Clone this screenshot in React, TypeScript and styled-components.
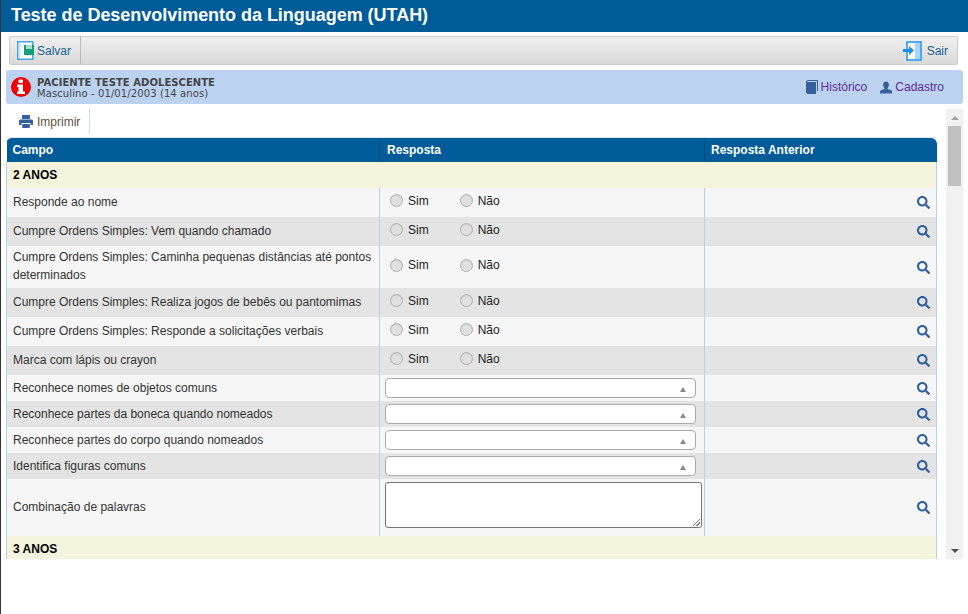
import React from 'react';
import styled, { createGlobalStyle } from 'styled-components';
import { FaSearch } from 'react-icons/fa';

const GlobalStyle = createGlobalStyle`
  html, body {
    margin: 0;
    padding: 0;
    background: #fff;
    overflow: hidden;
  }
  * {
    box-sizing: border-box;
  }
`;

type Row =
  | { kind: 'section'; label: string }
  | { kind: 'radio' | 'select' | 'text'; label: string };

const rows: Row[] = [
  { kind: 'section', label: '2 ANOS' },
  { kind: 'radio', label: 'Responde ao nome' },
  { kind: 'radio', label: 'Cumpre Ordens Simples: Vem quando chamado' },
  { kind: 'radio', label: 'Cumpre Ordens Simples: Caminha pequenas distâncias até pontos determinados' },
  { kind: 'radio', label: 'Cumpre Ordens Simples: Realiza jogos de bebês ou pantomimas' },
  { kind: 'radio', label: 'Cumpre Ordens Simples: Responde a solicitações verbais' },
  { kind: 'radio', label: 'Marca com lápis ou crayon' },
  { kind: 'select', label: 'Reconhece nomes de objetos comuns' },
  { kind: 'select', label: 'Reconhece partes da boneca quando nomeados' },
  { kind: 'select', label: 'Reconhece partes do corpo quando nomeados' },
  { kind: 'select', label: 'Identifica figuras comuns' },
  { kind: 'text', label: 'Combinação de palavras' },
  { kind: 'section', label: '3 ANOS' },
];

const SaveIcon = () => (
  <svg width="18" height="19" viewBox="0 0 18 19">
    <rect x="0.75" y="0.75" width="15" height="17.5" fill="#fff" stroke="#45a3e8" strokeWidth="1.5" />
    <rect x="7" y="4" width="10" height="10" fill="#12a07f" />
    <rect x="9" y="4" width="6" height="4" fill="#a8e0d0" />
    <rect x="2" y="2" width="2" height="15" fill="#d6ecfb" />
  </svg>
);

const ExitIcon = () => (
  <svg width="19" height="20" viewBox="0 0 19 20">
    <rect x="4" y="1" width="14" height="18" fill="#fff" stroke="#2a97ef" strokeWidth="1.6" />
    <path d="M12 2 L17 2 L17 18 L12 18 Z" fill="#a9d4f7" />
    <path d="M0 8 H6 V5 L11 9.5 L6 14 V11 H0 Z" fill="#1b8fee" />
  </svg>
);

const InfoIcon = () => (
  <svg width="20" height="20" viewBox="0 0 20 20">
    <circle cx="10" cy="10" r="10" fill="#f00000" />
    <rect x="7.5" y="2.5" width="4.5" height="3.5" rx="1" fill="#fff" />
    <path d="M6 7.5 H12 V14.5 H14 V17 H6 V14.5 H7.5 V10 H6 Z" fill="#fff" />
  </svg>
);

const BookIcon = () => (
  <svg width="12" height="14" viewBox="0 0 12 14">
    <path d="M0 1.5 L1.5 0 H12 V11 H11 V1 H2 L1 2 H10 V14 H1.5 L0 12.5 Z" fill="#36609c" />
  </svg>
);

const UserIcon = () => (
  <svg width="12" height="13" viewBox="0 0 13 13">
    <path d="M6.5 0 C8.6 0 9.6 1.6 9.6 3.6 C9.6 5.2 8.9 6.4 8.2 7.2 V8 L12 9.6 C12.7 9.9 13 10.4 13 11 V13 H0 V11 C0 10.4 0.3 9.9 1 9.6 L4.8 8 V7.2 C4.1 6.4 3.4 5.2 3.4 3.6 C3.4 1.6 4.4 0 6.5 0 Z" fill="#36609c" />
  </svg>
);

const PrintIcon = () => (
  <svg width="14" height="13" viewBox="0 0 14 13">
    <path d="M3 0 H11 V4 H3 Z" fill="#36609c" />
    <path d="M1.5 4.5 H12.5 C13.4 4.5 14 5.1 14 6 V10 H11.5 V8 H2.5 V10 H0 V6 C0 5.1 0.6 4.5 1.5 4.5 Z" fill="#36609c" />
    <path d="M3.2 9 H10.8 V13 H3.2 Z" fill="#36609c" />
  </svg>
);

const Radio = ({ label }: { label: string }) => (
  <RadioLabel>
    <RadioDot />
    {label}
  </RadioLabel>
);

export default function App() {
  return (
    <Page>
      <GlobalStyle />
      <TitleBar>Teste de Desenvolvimento da Linguagem (UTAH)</TitleBar>
      <Toolbar>
        <SaveButton>
          <SaveIcon />
          Salvar
        </SaveButton>
        <ExitButton>
          <ExitIcon />
          Sair
        </ExitButton>
      </Toolbar>
      <PatientBar>
        <InfoIcon />
        <PatientInfo>
          <PatientName>PACIENTE TESTE ADOLESCENTE</PatientName>
          <PatientMeta>Masculino - 01/01/2003 (14 anos)</PatientMeta>
        </PatientInfo>
        <PatientLinks>
          <PatientLink>
            <BookIcon />
            Histórico
          </PatientLink>
          <PatientLink>
            <UserIcon />
            Cadastro
          </PatientLink>
        </PatientLinks>
      </PatientBar>
      <Body>
        <Main>
          <PrintBar>
            <PrintButton>
              <PrintIcon />
              Imprimir
            </PrintButton>
          </PrintBar>
          <TableFrame>
            <Table>
              <colgroup>
                <col style={{ width: 373 }} />
                <col style={{ width: 325 }} />
                <col />
              </colgroup>
              <thead>
                <tr>
                  <HeadCell>Campo</HeadCell>
                  <HeadCell>Resposta</HeadCell>
                  <HeadCell>Resposta Anterior</HeadCell>
                </tr>
              </thead>
              <tbody>
                {rows.map((row, i) =>
                  row.kind === 'section' ? (
                    <tr key={i}>
                      <SectionCell colSpan={3}>{row.label}</SectionCell>
                    </tr>
                  ) : (
                    <DataRow key={i} $odd={i % 2 === 1} $kind={row.kind}>
                      <LabelCell $kind={row.kind}>{row.label}</LabelCell>
                      <AnswerCell>
                        {row.kind === 'radio' && (
                          <RadioGroup>
                            <Radio label="Sim" />
                            <Radio label="Não" />
                          </RadioGroup>
                        )}
                        {row.kind === 'select' && <SelectBox />}
                        {row.kind === 'text' && <TextBox />}
                      </AnswerCell>
                      <PreviousCell>
                        <FaSearch size={13} color="#2f5f9e" />
                      </PreviousCell>
                    </DataRow>
                  ),
                )}
              </tbody>
            </Table>
          </TableFrame>
        </Main>
        <ScrollTrack>
          <ScrollUp />
          <ScrollThumb />
          <ScrollDown />
        </ScrollTrack>
      </Body>
    </Page>
  );
}

const Page = styled.div`
  height: 614px;
  border-left: 1px solid #333;
  font-family: 'Liberation Sans', Arial, sans-serif;
  overflow: hidden;
`;

const TitleBar = styled.div`
  height: 32px;
  margin-left: -1px;
  padding: 0 0 2px 11px;
  display: flex;
  align-items: center;
  background: #005b99;
  color: #fff;
  font-size: 18px;
  font-weight: bold;
  letter-spacing: -0.03px;
`;

const Toolbar = styled.div`
  height: 29px;
  margin: 4px 10px 0 8px;
  display: flex;
  justify-content: space-between;
  border: 1px solid #ccc;
  border-radius: 2px;
  background: linear-gradient(#f0f0f0, #d9d9d9);
`;

const ToolButton = styled.div`
  display: flex;
  align-items: center;
  color: #1c5f94;
  font-size: 12px;
`;

const SaveButton = styled(ToolButton)`
  width: 71px;
  padding-left: 7px;
  gap: 2px;
  border-right: 1px solid #bbb;
`;

const ExitButton = styled(ToolButton)`
  padding-right: 9px;
  gap: 5px;
`;

const PatientBar = styled.div`
  height: 34px;
  margin: 5px 5px 0 5px;
  padding-left: 5px;
  display: flex;
  align-items: center;
  gap: 6px;
  background: #bbd3f1;
  border-radius: 3px;
`;

const PatientInfo = styled.div`
  display: flex;
  flex-direction: column;
  margin-top: 1px;
  font-family: 'DejaVu Sans', Verdana, sans-serif;
  font-size: 10px;
  color: #444;
`;

const PatientName = styled.span`
  font-weight: bold;
  line-height: 11px;
  letter-spacing: 0.05px;
`;

const PatientMeta = styled.span`
  line-height: 11px;
  letter-spacing: 0.1px;
`;

const PatientLinks = styled.div`
  margin-left: auto;
  padding-right: 19px;
  display: flex;
  gap: 13px;
`;

const PatientLink = styled.div`
  display: flex;
  align-items: center;
  gap: 3px;
  color: #5b2d91;
  font-size: 12px;
`;

const Body = styled.div`
  margin: 5px 5px 0 5px;
  height: 450px;
  display: flex;
  justify-content: space-between;
`;

const Main = styled.div`
  width: 931px;
  overflow: hidden;
`;

const PrintBar = styled.div`
  height: 29px;
  padding-bottom: 3px;
  border-bottom: 1px solid #d9e6f7;
  display: flex;
`;

const PrintButton = styled.div`
  width: 84px;
  padding-left: 13px;
  display: flex;
  align-items: center;
  gap: 4px;
  font-size: 12px;
  color: #5f5040;
  border-right: 1px solid #c9d9f0;
`;

const TableFrame = styled.div`
  border-radius: 6px 6px 0 0;
  overflow: hidden;
`;

const Table = styled.table`
  width: 100%;
  table-layout: fixed;
  border-collapse: collapse;
  font-size: 12px;
  color: #333;
`;

const HeadCell = styled.th`
  height: 24px;
  padding: 0 6px;
  background: #005b99;
  color: #fff;
  font-size: 12px;
  text-align: left;
  border-left: 1px solid #004a7d;

  &:first-child {
    border-left: none;
  }

  &:nth-child(2) {
    padding-left: 7px;
  }
`;

const SectionCell = styled.td`
  height: 26px;
  padding: 0 6px;
  background: #f4f4dc;
  color: #000;
  font-weight: bold;
  border-left: 1px solid #b9d0f5;
  border-right: 1px solid #b9d0f5;
`;

const rowHeights = { radio: 29, select: 26, text: 57 };

const DataRow = styled.tr<{ $odd: boolean; $kind: 'radio' | 'select' | 'text' }>`
  height: ${(p) => rowHeights[p.$kind]}px;
  background: ${(p) => (p.$odd ? '#f6f6f6' : '#e4e4e4')};
`;

const LabelCell = styled.td<{ $kind: 'radio' | 'select' | 'text' }>`
  padding: ${(p) => (p.$kind === 'select' ? '3px 6px' : '2px 6px 4px')};
  line-height: 18px;
  border-left: 1px solid #b9d0f5;
`;

const AnswerCell = styled.td`
  padding: 0 5px;
  border-left: 1px solid #b9d0f5;
`;

const PreviousCell = styled.td`
  padding: 3px 6px 0 0;
  text-align: right;
  border-left: 1px solid #b9d0f5;
  border-right: 1px solid #b9d0f5;
`;

const RadioGroup = styled.div`
  display: flex;
  gap: 31px;
  padding-left: 5px;
  padding-bottom: 4px;
`;

const RadioLabel = styled.label`
  display: flex;
  align-items: center;
  gap: 5px;
  color: #222;
`;

const RadioDot = styled.span`
  width: 13px;
  height: 13px;
  border-radius: 50%;
  border: 1px solid #b0b0b0;
  background: #e0e0e0;
  box-shadow: inset 0 1px 1px #cfcfcf;
`;

const SelectBox = styled.div`
  position: relative;
  width: 311px;
  height: 20px;
  background: #fff;
  border: 1px solid #aaa;
  border-radius: 4px;

  &::after {
    content: '';
    position: absolute;
    right: 9px;
    top: 8px;
    border-left: 3px solid transparent;
    border-right: 3px solid transparent;
    border-bottom: 5px solid #888;
  }
`;

const TextBox = styled.div`
  position: relative;
  width: 317px;
  height: 46px;
  margin-bottom: 5px;
  background: #fff;
  border: 1px solid #767676;
  border-radius: 3px;

  &::after {
    content: '';
    position: absolute;
    right: 1px;
    bottom: 1px;
    width: 7px;
    height: 7px;
    background: linear-gradient(
      135deg,
      transparent 45%,
      #777 45%,
      #777 55%,
      transparent 55%,
      transparent 70%,
      #777 70%,
      #777 80%,
      transparent 80%
    );
  }
`;

const ScrollTrack = styled.div`
  width: 17px;
  display: flex;
  flex-direction: column;
  align-items: center;
  background: #f1f1f1;
`;

const ScrollUp = styled.div`
  height: 17px;
  width: 17px;
  display: flex;
  justify-content: center;
  align-items: center;

  &::before {
    content: '';
    border-left: 4px solid transparent;
    border-right: 4px solid transparent;
    border-bottom: 4px solid #a3a3a3;
  }
`;

const ScrollThumb = styled.div`
  width: 13px;
  height: 60px;
  background: #c1c1c1;
`;

const ScrollDown = styled.div`
  margin-top: auto;
  height: 17px;
  width: 17px;
  display: flex;
  justify-content: center;
  align-items: center;

  &::before {
    content: '';
    border-left: 4px solid transparent;
    border-right: 4px solid transparent;
    border-top: 4px solid #505050;
  }
`;
